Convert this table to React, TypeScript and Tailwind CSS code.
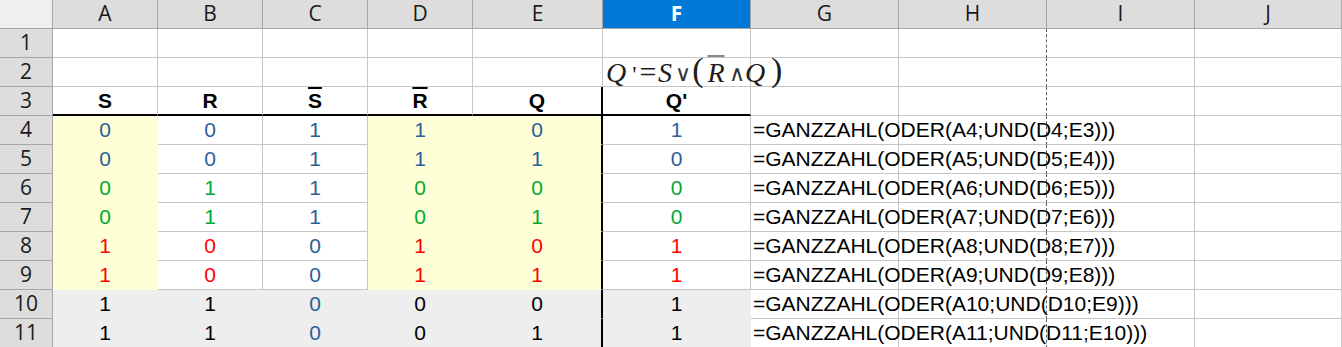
import clsx from "clsx";

type Tone = "b" | "g" | "r" | "k";
type Fill = "y" | "g" | "w";

const toneClass: Record<Tone, string> = {
  b: "text-[#2a6099]",
  g: "text-[#00a933]",
  r: "text-[#ff0000]",
  k: "text-black",
};

const letters = ["A", "B", "C", "D", "E", "F", "G", "H", "I", "J"];

// rows 4..11: values A-F and their colours
const data = [
  { vals: "001101", tones: "bbbbbb" },
  { vals: "001110", tones: "bbbbbb" },
  { vals: "011000", tones: "ggbggg" },
  { vals: "011010", tones: "ggbggg" },
  { vals: "100101", tones: "rrbrrr" },
  { vals: "100111", tones: "rrbrrr" },
  { vals: "110001", tones: "kkbkkk" },
  { vals: "110011", tones: "kkbkkk" },
];

const arial = "font-['Liberation_Sans',Arial,sans-serif] text-[21px] leading-[28px]";
const ui = "font-['Open_Sans','Noto_Sans',sans-serif] text-[21px]";

function emptyCls(l: string) {
  return clsx(
    "h-[29px] border-r border-b border-[#c6c6c6]",
    l === "H" && "[border-right-style:dashed] border-r-[#5c5c5c]"
  );
}

function RowHead({ n }: { n: number }) {
  return (
    <div className={clsx("flex h-[29px] items-center justify-center border-r border-b border-[#a6a6a6] bg-[#dddddd] text-[#1a1a1a]", ui)}>
      {n}
    </div>
  );
}

function fillOf(row: number, col: number): Fill {
  if (row >= 6) return "g";
  if (col === 0 || col === 3 || col === 4) return "y";
  return "w";
}

function ValueCell({ row, col }: { row: number; col: number }) {
  const fill = fillOf(row, col);
  const v = data[row].vals[col];
  const tone = data[row].tones[col] as Tone;
  return (
    <div
      className={clsx(
        "flex h-[29px] items-center justify-center border-b",
        arial,
        toneClass[tone],
        fill === "y" && "bg-[#ffffd7] border-b-[#ffffd7]",
        fill === "g" && "bg-[#eeeeee] border-b-[#eeeeee]",
        fill === "w" && "border-b-[#c6c6c6]",
        col === 4
          ? "border-r-2 border-r-black"
          : clsx(
              "border-r",
              fill === "y" && "border-r-[#ffffd7]",
              fill === "g" && "border-r-[#eeeeee]",
              fill === "w" && "border-r-[#c6c6c6]"
            )
      )}
    >
      {v}
    </div>
  );
}

function Formula() {
  return (
    <div className="flex h-full items-baseline pl-[3px] whitespace-nowrap font-['Liberation_Serif','Times_New_Roman',serif] leading-[26px] text-[#1c1c1c]">
      <span className="w-[25px] shrink-0 text-[28px] italic">Q</span>
      <span className="w-[7px] shrink-0 text-center text-[24px]">'</span>
      <span className="w-[20px] shrink-0 text-center text-[30px]">=</span>
      <span className="w-[16px] shrink-0 text-[28px] italic">S</span>
      <span className="relative -top-[1px] w-[18px] shrink-0 text-center font-['DejaVu_Sans',sans-serif] text-[22px] font-light text-[#333]">∨</span>
      <span className="relative -top-[1px] w-[12px] shrink-0 text-center text-[34px]">(</span>
      <span className="w-[24px] shrink-0 text-center text-[28px] italic overline decoration-[#8a8a8a] decoration-[2px]">R</span>
      <span className="relative -top-[1px] w-[17px] shrink-0 text-center font-['DejaVu_Sans',sans-serif] text-[22px] font-light text-[#333]">∧</span>
      <span className="w-[26px] shrink-0 text-[28px] italic">Q</span>
      <span className="relative -top-[1px] w-[10px] shrink-0 text-center text-[34px]">)</span>
    </div>
  );
}

const heads = ["S", "R", "S", "R", "Q", "Q'"];

export default function App() {
  return (
    <div className="h-[347px] w-[1342px] overflow-hidden bg-white">
      <div className="grid grid-cols-[53px_105px_105px_105px_105px_130px_148px_148px_148px_148px_147px]">
        {/* column headers */}
        <div className="h-[29px] border-r border-b border-[#a6a6a6] bg-[#efefef]" />
        {letters.map((l) => (
          <div
            key={l}
            className={clsx(
              "flex h-[29px] items-center justify-center border-r border-b border-[#a6a6a6]",
              ui,
              l === "F" ? "bg-[#0078d7] font-bold text-white" : "bg-[#dddddd] text-[#1a1a1a]"
            )}
          >
            {l}
          </div>
        ))}

        {/* row 1 */}
        <RowHead n={1} />
        {letters.map((l) => (
          <div key={l} className={emptyCls(l)} />
        ))}

        {/* row 2 */}
        <RowHead n={2} />
        {letters.map((l) => (
          <div key={l} className={emptyCls(l)}>
            {l === "F" && <Formula />}
          </div>
        ))}

        {/* row 3: table heads */}
        <RowHead n={3} />
        {heads.map((h, i) => (
          <div
            key={i}
            className={clsx(
              "flex h-[29px] items-center justify-center border-b-2 border-b-black font-bold text-black",
              arial,
              i === 4 ? "border-r-2 border-r-black" : "border-r border-r-[#c6c6c6]"
            )}
          >
            <span className={clsx((i === 2 || i === 3) && "overline decoration-2")}>{h}</span>
          </div>
        ))}
        {letters.slice(6).map((l) => (
          <div key={l} className={emptyCls(l)} />
        ))}

        {/* rows 4-11 */}
        {data.map((_, r) => {
          const n = r + 4;
          return [
            <RowHead key={`h${n}`} n={n} />,
            ...[0, 1, 2, 3, 4, 5].map((c) => <ValueCell key={`${n}-${c}`} row={r} col={c} />),
            <div
              key={`g${n}`}
              className={clsx("h-[29px] border-r border-b border-[#c6c6c6] pl-[2px] whitespace-nowrap text-black", arial)}
            >
              {`=GANZZAHL(ODER(A${n};UND(D${n};E${n - 1})))`}
            </div>,
            <div key={`hh${n}`} className={emptyCls("H")} />,
            <div key={`i${n}`} className={emptyCls("I")} />,
            <div key={`j${n}`} className={emptyCls("J")} />,
          ];
        })}
      </div>
    </div>
  );
}
